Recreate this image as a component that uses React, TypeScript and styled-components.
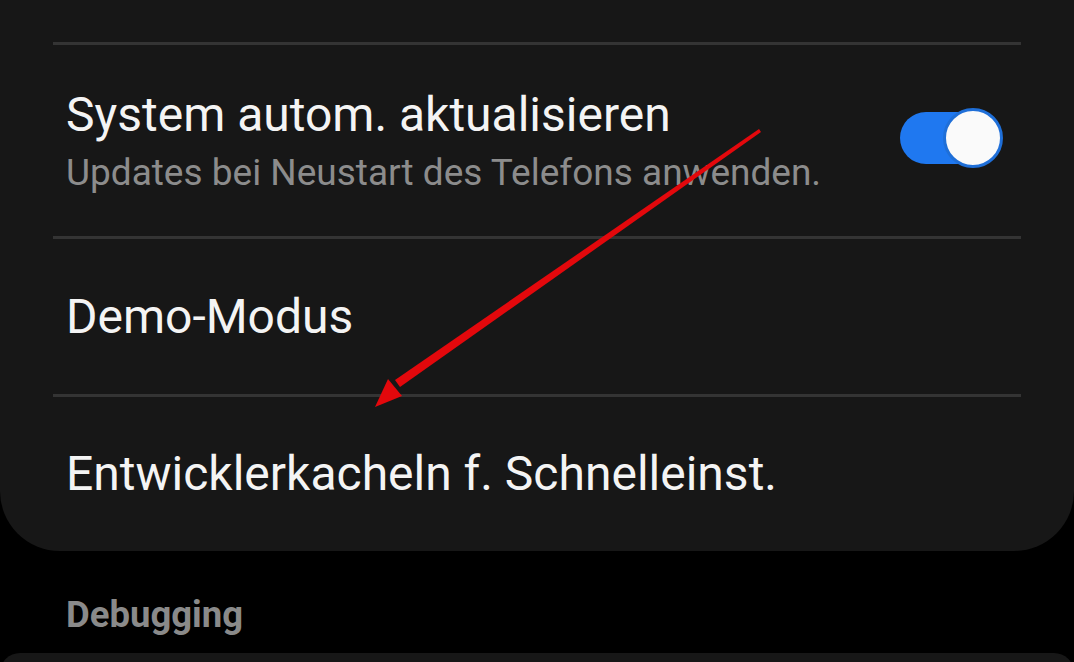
import styled, { createGlobalStyle } from "styled-components";

const Global = createGlobalStyle`
  html, body {
    margin: 0;
    padding: 0;
    background: #000;
    overflow: hidden;
  }
  body {
    font-family: Roboto, "Noto Sans", sans-serif;
    -webkit-font-smoothing: antialiased;
  }
`;

const Page = styled.div`
  position: relative;
  width: 1074px;
  height: 662px;
  background: #000;
  overflow: hidden;
`;

const Card = styled.div<{ $top?: boolean }>`
  background: #171717;
  border-radius: ${(p) => (p.$top ? "0 0 60px 60px" : "60px 60px 0 0")};
  padding: 0 53px;
`;

const Divider = styled.div`
  height: 3px;
  background: #343434;
`;

const Row = styled.div<{ $h: number }>`
  height: ${(p) => p.$h}px;
  display: flex;
  align-items: center;
  justify-content: space-between;
  padding: 0 13px;
`;

const TextCol = styled.div`
  display: flex;
  flex-direction: column;
  padding-top: 2px;
`;

const Title = styled.div`
  color: #f4f4f4;
  font-size: 48px;
  line-height: 52px;
  white-space: nowrap;
`;

const Sub = styled.div`
  color: #8c8c8c;
  font-size: 37px;
  line-height: 44px;
  margin-top: 10px;
  white-space: nowrap;
`;

const Track = styled.div`
  position: relative;
  width: 92px;
  height: 52px;
  border-radius: 26px;
  background: #1f78f0;
  margin-right: 16px;
  margin-top: -6px;
`;

const Knob = styled.div`
  position: absolute;
  right: -11px;
  top: -4px;
  width: 54px;
  height: 54px;
  border-radius: 50%;
  background: #fafafa;
  border: 3px solid #1f6fd8;
`;

const Section = styled.div`
  box-sizing: border-box;
  height: 102px;
  padding: 42px 66px 0;
  color: #8a8a8a;
  font-size: 36.5px;
  line-height: 44px;
  font-weight: 700;
`;

const BottomCard = styled(Card)`
  height: 20px;
`;

const Arrow = styled.svg`
  position: absolute;
  left: 0;
  top: 0;
  pointer-events: none;
`;

export default function App() {
  return (
    <Page>
      <Global />
      <Card $top>
        <Row $h={42} />
        <Divider />
        <Row $h={191}>
          <TextCol>
            <Title>System autom. aktualisieren</Title>
            <Sub>Updates bei Neustart des Telefons anwenden.</Sub>
          </TextCol>
          <Track>
            <Knob />
          </Track>
        </Row>
        <Divider />
        <Row $h={155}>
          <Title>Demo-Modus</Title>
        </Row>
        <Divider />
        <Row $h={154}>
          <Title>Entwicklerkacheln f. Schnelleinst.</Title>
        </Row>
      </Card>
      <Section>Debugging</Section>
      <BottomCard />
      <Arrow width="1074" height="662" viewBox="0 0 1074 662">
        <polygon points="759,129 761,132 400,387 395,380" fill="#e3080c" />
        <polygon points="375,407 388,379 402,396" fill="#e3080c" />
      </Arrow>
    </Page>
  );
}
